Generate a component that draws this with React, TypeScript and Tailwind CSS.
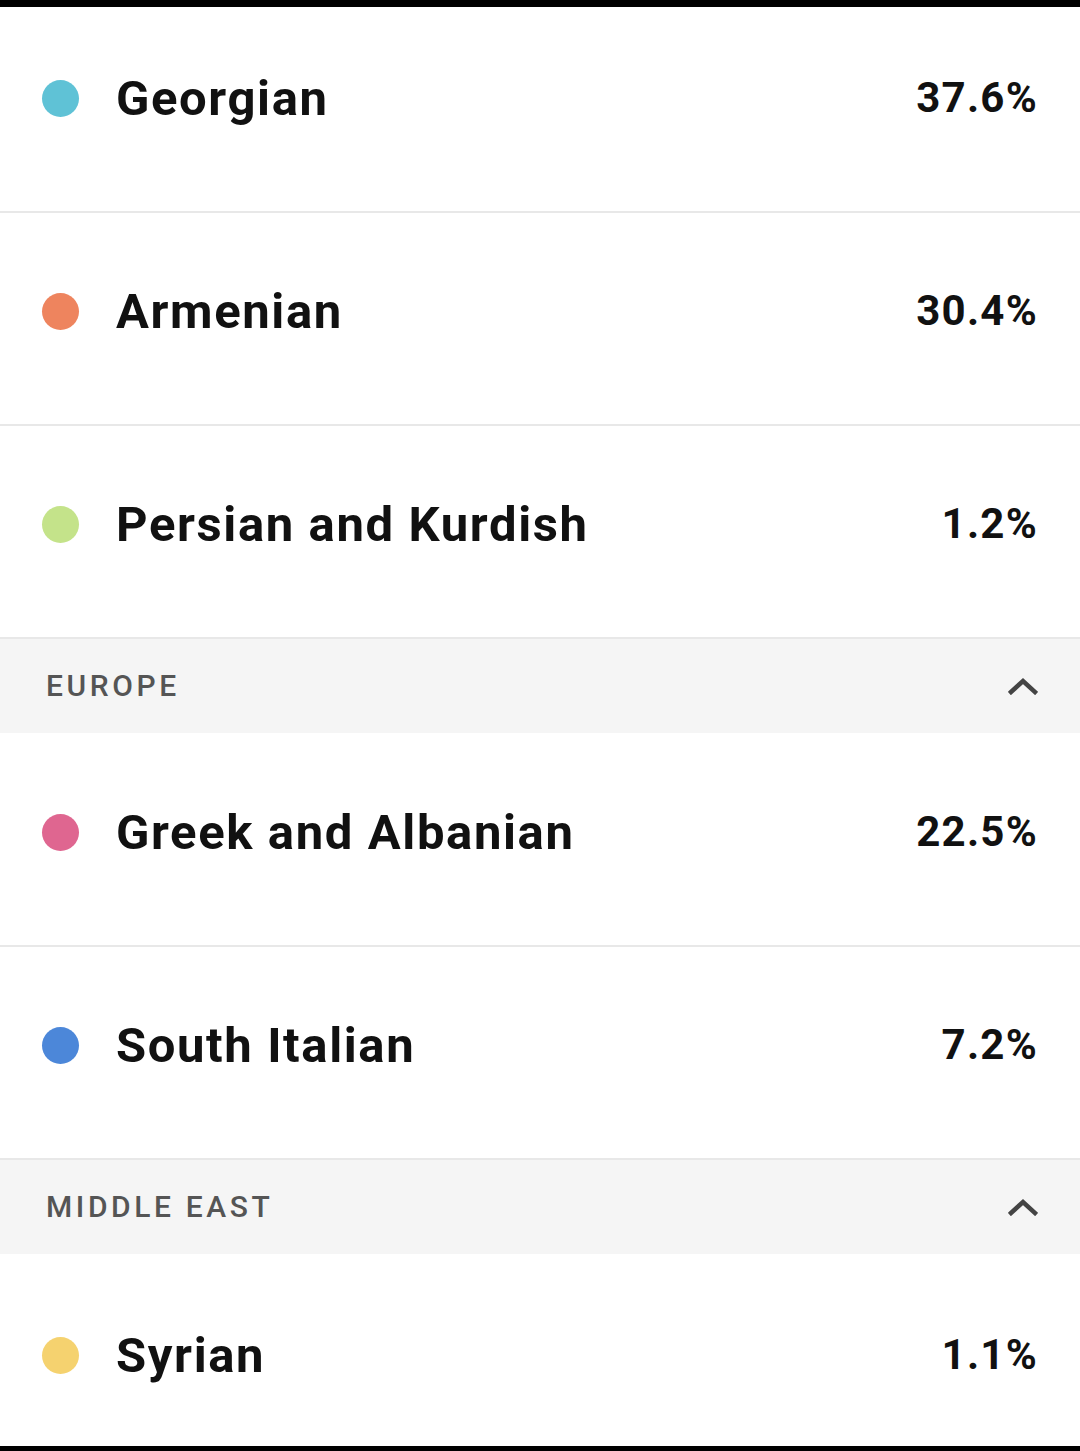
type Row = { kind: 'row'; name: string; pct: string; dot: string; h: string };
type Head = { kind: 'head'; title: string };

const items: (Row | Head)[] = [
  { kind: 'row', name: 'Georgian', pct: '37.6%', dot: 'bg-[#5fc2d6]', h: 'h-[204px] pb-[22px]' },
  { kind: 'row', name: 'Armenian', pct: '30.4%', dot: 'bg-[#ee845e]', h: 'h-[211px] pb-[15px]' },
  { kind: 'row', name: 'Persian and Kurdish', pct: '1.2%', dot: 'bg-[#c4e38a]', h: 'h-[211px] pb-[15px]' },
  { kind: 'head', title: 'EUROPE' },
  { kind: 'row', name: 'Greek and Albanian', pct: '22.5%', dot: 'bg-[#df6690]', h: 'h-[212px] pb-[14px]' },
  { kind: 'row', name: 'South Italian', pct: '7.2%', dot: 'bg-[#4c87d9]', h: 'h-[211px] pb-[15px]' },
  { kind: 'head', title: 'MIDDLE EAST' },
  { kind: 'row', name: 'Syrian', pct: '1.1%', dot: 'bg-[#f5d26f]', h: 'h-[192px] pt-[10px]' },
];

function Chevron() {
  return (
    <svg width="30" height="18" viewBox="0 0 30 18" fill="none">
      <polyline points="3,15 15,4 27,15" stroke="#444" strokeWidth="4.5" strokeLinecap="square" />
    </svg>
  );
}

export default function App() {
  return (
    <div className="w-[1080px] h-[1451px] bg-white flex flex-col overflow-hidden font-['Roboto',sans-serif]">
      <div className="h-[7px] bg-black shrink-0" />
      {items.map((it, i) => {
        const next = items[i + 1];
        if (it.kind === 'head') {
          return (
            <div key={i} className="h-[94px] shrink-0 bg-[#f5f5f5] flex items-center justify-between pl-[46px] pr-[42px]">
              <span className="text-[30px] font-medium tracking-[0.12em] text-[#555] leading-none">{it.title}</span>
              <Chevron />
            </div>
          );
        }
        const border = next ? 'border-b-2 border-[#e8e8e8]' : '';
        return (
          <div key={i} className={`shrink-0 box-content ${border}`}>
            <div className={`${it.h} box-border flex items-center pl-[42px] pr-[42px]`}>
              <span className={`w-[37px] h-[37px] rounded-full ${it.dot} shrink-0`} />
              <span className="ml-[37px] text-[49px] font-bold text-[#111] leading-none tracking-[0.033em]">{it.name}</span>
              <span className="ml-auto text-[42px] font-bold text-[#111] leading-none tracking-[0.03em]">{it.pct}</span>
            </div>
          </div>
        );
      })}
      <div className="flex-1 bg-black" />
    </div>
  );
}
